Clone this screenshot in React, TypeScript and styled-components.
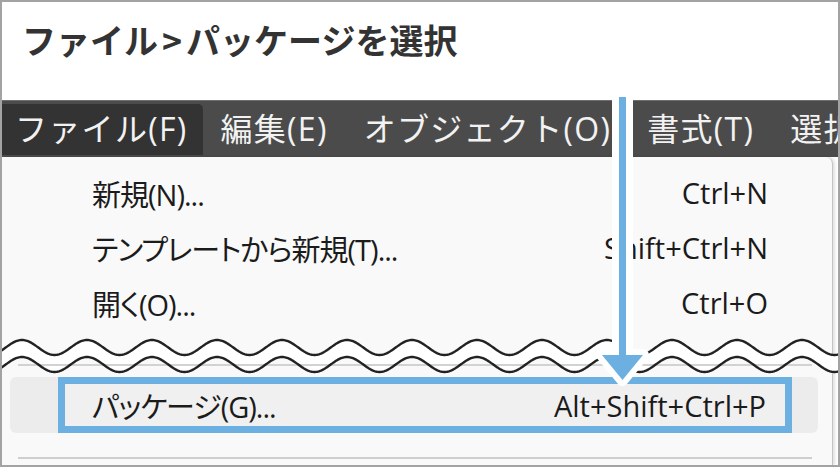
import React from 'react';
import styled, { createGlobalStyle } from 'styled-components';

const BLUE = '#6cafe1';

const GlobalStyle = createGlobalStyle`
  html, body {
    margin: 0;
    padding: 0;
    background: #ffffff;
  }
  body {
    width: 840px;
    height: 467px;
    overflow: hidden;
  }
`;

// wave break drawing
const PERIOD = 65;
const AMP = 7.5;

const wavePoints = (cy: number) => {
  const pts: string[] = [];
  for (let x = -10; x <= 850; x += 1) {
    const y = cy - AMP * Math.cos((2 * Math.PI * (x - 20)) / PERIOD);
    pts.push(`${x},${y.toFixed(2)}`);
  }
  return pts;
};

function WaveBreak() {
  const top = wavePoints(17.5);
  const bottom = wavePoints(34.5);
  const band = [...top, ...bottom.slice().reverse()].join(' ');
  return (
    <WaveSvg width="840" height="45" viewBox="0 0 840 45">
      <polygon points={band} fill="#ffffff" />
      <line x1="16" y1="35" x2="810" y2="35" stroke="#d2d2d2" strokeWidth="2" />
      <polyline points={top.join(' ')} fill="none" stroke="#222" strokeWidth="2.4" />
      <polyline points={bottom.join(' ')} fill="none" stroke="#222" strokeWidth="2.4" />
    </WaveSvg>
  );
}

function Arrow() {
  return (
    <ArrowSvg width="66" height="300" viewBox="0 0 66 300">
      <rect x="22" y="2" width="21" height="262" fill="#ffffff" />
      <polygon
        points="12,260 53,260 32.5,285"
        fill={BLUE}
        stroke="#ffffff"
        strokeWidth="12"
        strokeLinejoin="round"
        paintOrder="stroke"
      />
      <rect x="29" y="2" width="7" height="262" fill={BLUE} />
    </ArrowSvg>
  );
}

const menus = [
  { label: 'ファイル(F)', active: true },
  { label: '編集(E)' },
  { label: 'オブジェクト(O)' },
  { label: '書式(T)' },
  { label: '選択(S)' },
];

const items = [
  { label: '新規(N)...', key: 'Ctrl+N' },
  { label: 'テンプレートから新規(T)...', key: 'Shift+Ctrl+N' },
  { label: '開く(O)...', key: 'Ctrl+O' },
];

function App() {
  return (
    <>
      <GlobalStyle />
      <Frame>
        <Title>
          ファイル<Sep>&gt;</Sep>パッケージを選択
        </Title>
        <MenuBar>
          {menus.map((m) => (
            <MenuItem key={m.label} $active={m.active}>
              {m.label}
            </MenuItem>
          ))}
        </MenuBar>
        <Dropdown>
          {items.map((it) => (
            <Row key={it.label}>
              <Label>{it.label}</Label>
              <Shortcut>{it.key}</Shortcut>
            </Row>
          ))}
          <WaveBreak />
          <HighlightRow>
            <Callout>
              <Label>パッケージ(G)...</Label>
              <Shortcut>Alt+Shift+Ctrl+P</Shortcut>
            </Callout>
          </HighlightRow>
          <Separator />
        </Dropdown>
        <Arrow />
      </Frame>
    </>
  );
}

const Frame = styled.div`
  position: relative;
  box-sizing: border-box;
  width: 840px;
  height: 467px;
  border: 2px solid #a3a3a3;
  background: #ffffff;
  overflow: hidden;
  font-family: 'Open Sans', 'Noto Sans CJK JP', sans-serif;
`;

const Title = styled.h1`
  margin: 0;
  box-sizing: border-box;
  height: 98px;
  padding: 21px 0 0 20px;
  font-family: 'Noto Sans CJK JP', sans-serif;
  font-weight: 700;
  font-size: 34px;
  line-height: 34px;
  color: #333333;
  white-space: nowrap;
`;

const Sep = styled.span`
  margin: 0 4px;
`;

const MenuBar = styled.nav`
  display: flex;
  box-sizing: border-box;
  height: 57px;
  padding: 3px 0 2px;
  background: #4b4b4b;
  border-top: 1px solid #6e6e6e;
  white-space: nowrap;
`;

const MenuItem = styled.div<{ $active?: boolean }>`
  display: flex;
  align-items: center;
  flex-shrink: 0;
  padding: ${(p) => (p.$active ? '0 15px 5px 13px' : '0 18px 5px')};
  font-size: 32px;
  letter-spacing: 1.3px;
  color: #f2f2f2;
  background: ${(p) => (p.$active ? '#333333' : 'transparent')};
  border-radius: 0 5px 0 0;
`;

const Dropdown = styled.div`
  box-sizing: border-box;
  width: 831px;
  height: 308px;
  padding-top: 8px;
  background: #f9f9f9;
  border-right: 1px solid #c4c4c4;
  border-radius: 0 7px 0 0;
  box-shadow: 2px 0 3px rgba(0, 0, 0, 0.12);
  font-size: 29px;
  color: #1b1b1b;
  white-space: nowrap;
`;

const Row = styled.div`
  display: flex;
  justify-content: space-between;
  align-items: center;
  box-sizing: border-box;
  height: 55px;
  padding: 0 64px 0 90px;
`;

const Label = styled.span`
  font-feature-settings: 'palt';
  letter-spacing: -1px;
`;

const Shortcut = styled.span`
  letter-spacing: 0;
`;

const WaveSvg = styled.svg`
  display: block;
  overflow: visible;
`;

const HighlightRow = styled.div`
  display: flex;
  box-sizing: border-box;
  height: 56px;
  margin: 2px 14px 0 8px;
  padding: 0 26px 0 48px;
  background: #ececec;
  border-radius: 6px;
`;

const Callout = styled.div`
  flex: 1;
  display: flex;
  justify-content: space-between;
  align-items: center;
  box-sizing: border-box;
  padding: 0 19px 0 27px;
  border: 7px solid ${BLUE};
  background: #f0f0f0;
`;

const Separator = styled.div`
  width: 794px;
  height: 2px;
  margin: 24px 0 0 16px;
  background: #cfcfcf;
`;

const ArrowSvg = styled.svg`
  position: absolute;
  left: 588px;
  top: 93px;
`;

export default App;
